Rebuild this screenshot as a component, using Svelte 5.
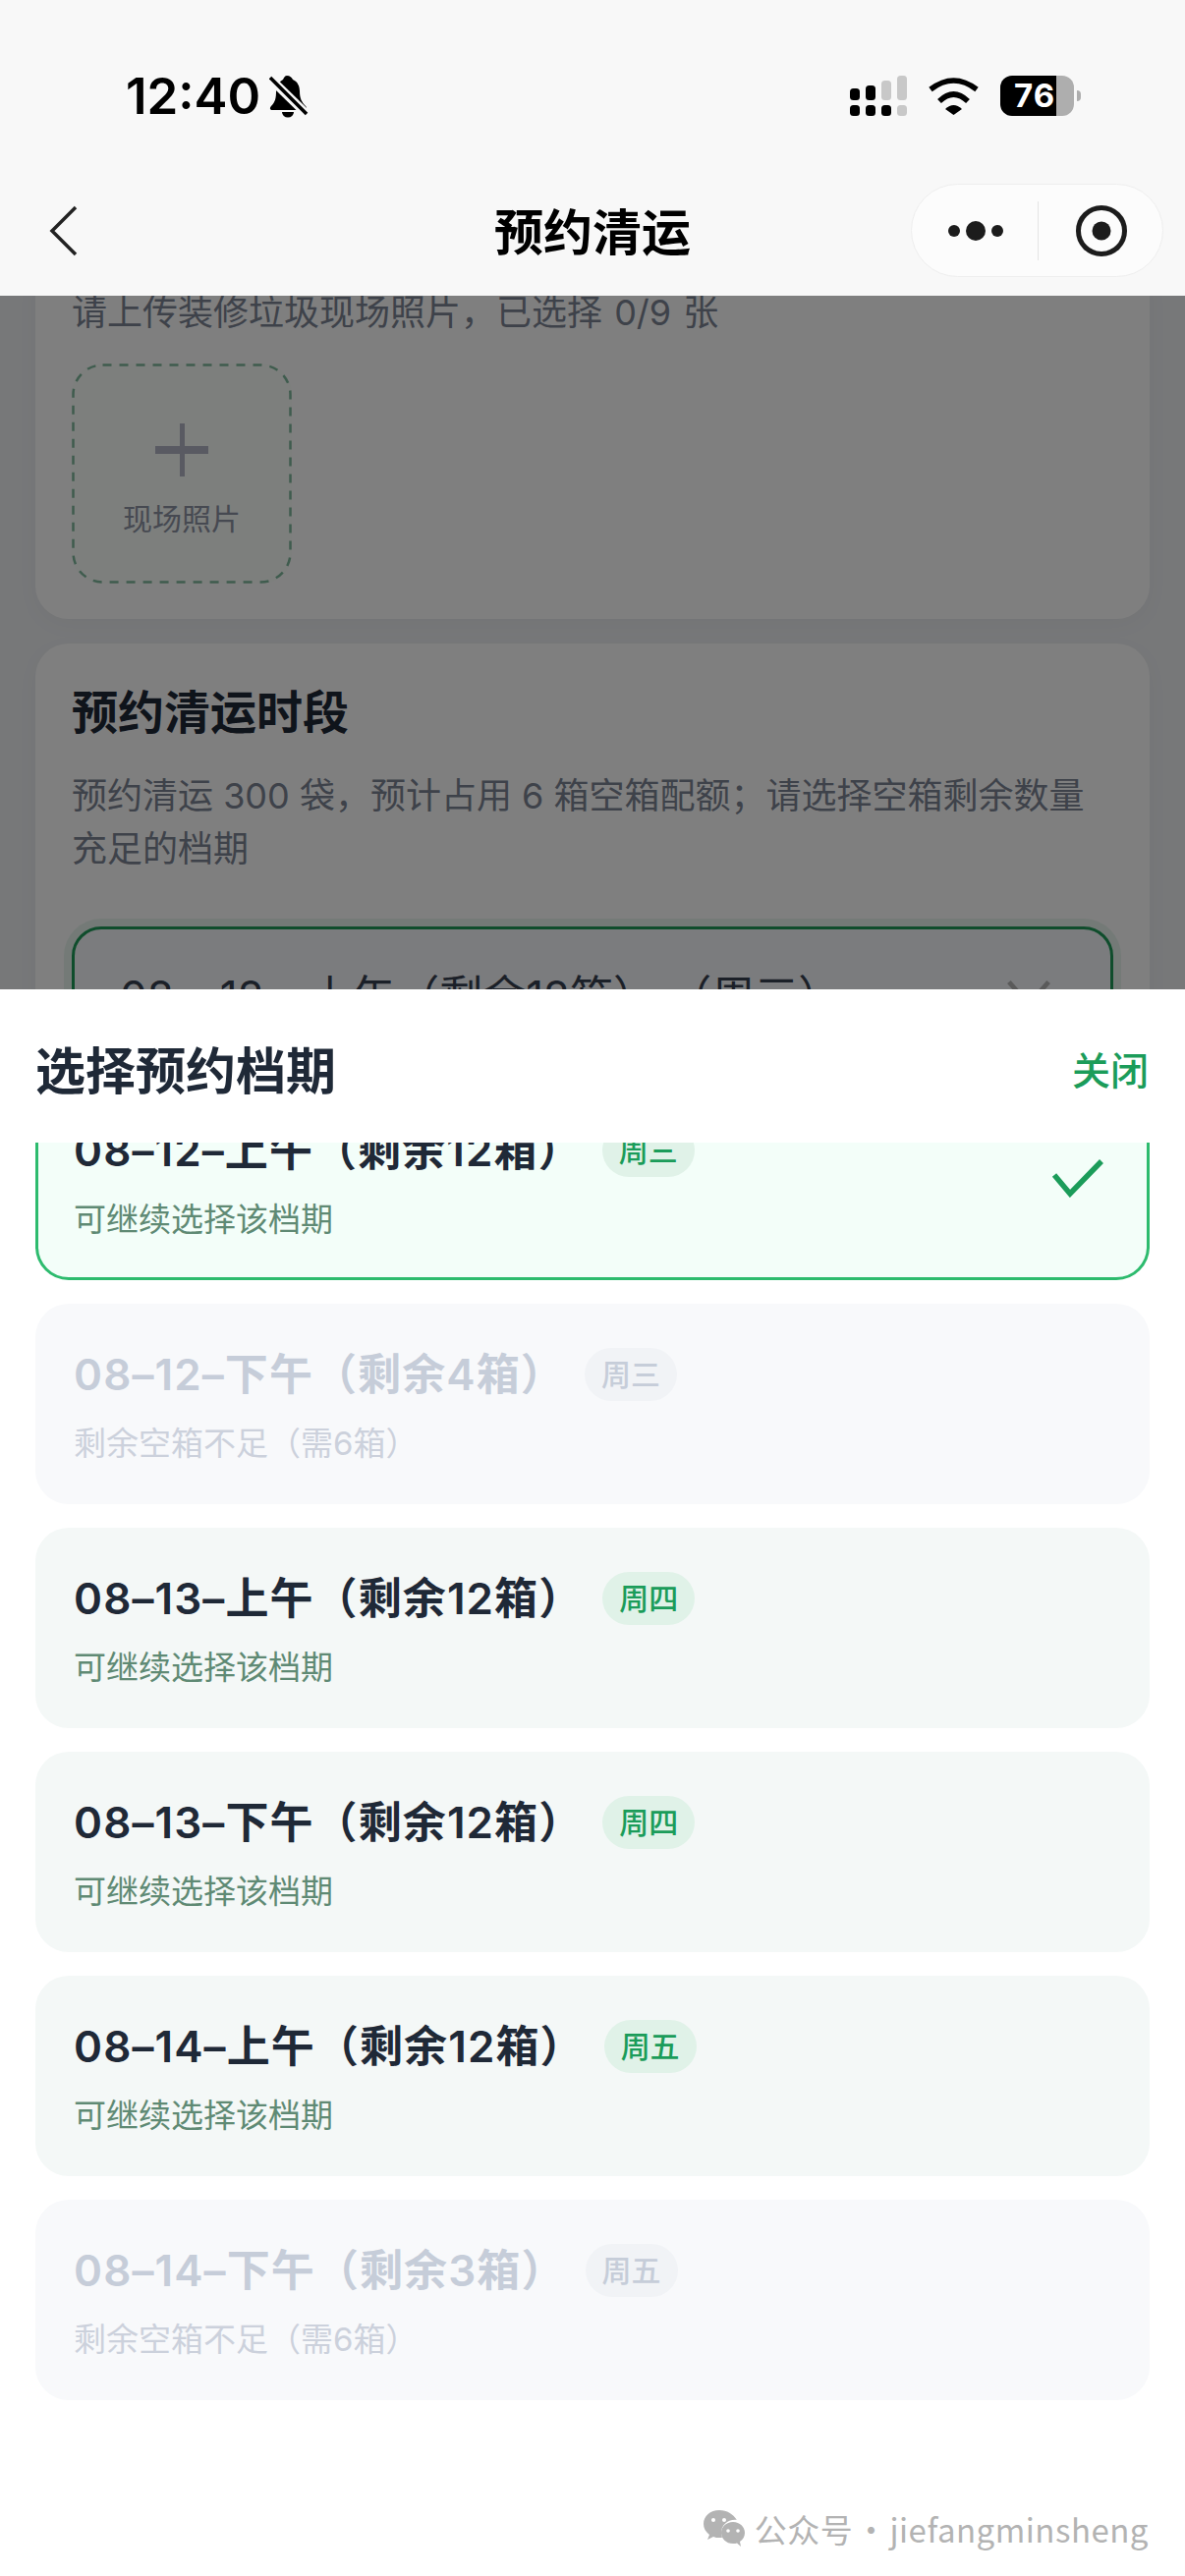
<script>
  import { onMount } from 'svelte'

  const slots = [
    { title: '08–12–上午（剩余12箱）', day: '周三', note: '可继续选择该档期', selected: true },
    { title: '08–12–下午（剩余4箱）', day: '周三', note: '剩余空箱不足（需6箱）', disabled: true },
    { title: '08–13–上午（剩余12箱）', day: '周四', note: '可继续选择该档期' },
    { title: '08–13–下午（剩余12箱）', day: '周四', note: '可继续选择该档期' },
    { title: '08–14–上午（剩余12箱）', day: '周五', note: '可继续选择该档期' },
    { title: '08–14–下午（剩余3箱）', day: '周五', note: '剩余空箱不足（需6箱）', disabled: true }
  ]

  let scroller

  onMount(() => {
    scroller.scrollTop = 64
  })
</script>

<div class="screen">
  <header class="top">
    <div class="status">
      <div class="status-left">
        <span class="time">12:40</span>
        <svg class="bell" viewBox="0 0 40 44" width="40" height="44">
          <path d="M18 1c3 0 5 2 6 4 5 2 7 7 7 12 0 7 2 11 6 15 2 2 1 4-1 4H3c-2 0-3-2-1-4 4-4 5-8 5-15 0-5 3-10 7-12 1-2 2-4 4-4z" fill="#000" />
          <path d="M13 38a6 5.500 0 0 0 12 0z" fill="#000" />
          <path d="M0 3l38 37" stroke="#f8f8f8" stroke-width="9" />
          <path d="M1 3l37 37" stroke="#000" stroke-width="3.500" />
        </svg>
      </div>
      <div class="status-right">
        <svg class="signal" viewBox="0 0 58 41" width="58" height="41">
          <rect x="0" y="13" width="10" height="12" rx="3.500" fill="#000" />
          <rect x="16" y="10" width="10" height="15" rx="3.500" fill="#000" />
          <rect x="32" y="5" width="10" height="20" rx="3.500" fill="#c8c8c8" />
          <rect x="48" y="0" width="10" height="25" rx="3.500" fill="#c8c8c8" />
          <rect x="0" y="30" width="10" height="11" rx="3.500" fill="#000" />
          <rect x="16" y="30" width="10" height="11" rx="3.500" fill="#000" />
          <rect x="32" y="30" width="10" height="11" rx="3.500" fill="#000" />
          <rect x="48" y="30" width="10" height="11" rx="3.500" fill="#c8c8c8" />
        </svg>
        <svg class="wifi" viewBox="0 0 51 39" width="51" height="39">
          <path d="M2 13Q25.500-5 49 13" fill="none" stroke="#000" stroke-width="5.500" />
          <path d="M11 25Q25.500 11 40 25" fill="none" stroke="#000" stroke-width="5.500" />
          <path d="M17 33Q25.500 25 34 33L25.500 39z" fill="#000" />
        </svg>
        <div class="battery">
          <div class="battery-body"><span>76</span></div>
          <div class="battery-nub"></div>
        </div>
      </div>
    </div>
    <nav class="nav">
      <svg class="back" viewBox="0 0 30 52" width="30" height="52">
        <path d="M27 2L3 26l24 24" fill="none" stroke="#222" stroke-width="3.500" />
      </svg>
      <div class="nav-title">预约清运</div>
      <div class="capsule">
        <svg viewBox="0 0 56 20" width="56" height="20">
          <circle cx="6" cy="10" r="6" fill="#1c1c1c" />
          <circle cx="28" cy="10" r="10" fill="#1c1c1c" />
          <circle cx="50" cy="10" r="6" fill="#1c1c1c" />
        </svg>
        <div class="capsule-line"></div>
        <svg viewBox="0 0 52 52" width="52" height="52">
          <circle cx="26" cy="26" r="23.500" fill="none" stroke="#1c1c1c" stroke-width="5" />
          <circle cx="26" cy="26" r="9.500" fill="#1c1c1c" />
        </svg>
      </div>
    </nav>
  </header>

  <main class="page">
    <section class="card first">
      <p class="desc">请上传装修垃圾现场照片，已选择 0/9 张</p>
      <div class="upload">
        <svg class="dash" viewBox="0 0 224 224" width="224" height="224">
          <rect x="1.500" y="1.500" width="221" height="221" rx="30" fill="none" stroke="#7fb89c" stroke-width="2.500" stroke-dasharray="9 8" />
        </svg>
        <div class="plus"></div>
        <span>现场照片</span>
      </div>
    </section>
    <section class="card">
      <h2>预约清运时段</h2>
      <p class="desc">预约清运 300 袋，预计占用 6 箱空箱配额；请选择空箱剩余数量充足的档期</p>
      <div class="picker">
        <span>08 – 12 – 上午（剩余12箱） （周三）</span>
        <svg viewBox="0 0 48 30" width="46" height="30">
          <path d="M3 3l21 24L45 3" fill="none" stroke="#b5b5b5" stroke-width="5" />
        </svg>
      </div>
    </section>
  </main>

  <div class="mask"></div>

  <div class="sheet">
    <div class="sheet-head">
      <h3>选择预约档期</h3>
      <button type="button" class="close">关闭</button>
    </div>
    <div class="scroll" bind:this={scroller}>
      <div class="list">
        {#each slots as slot}
          <div class="slot" class:selected={slot.selected} class:disabled={slot.disabled}>
            <div class="slot-main">
              <div class="slot-title">
                <span>{slot.title}</span>
                <em>{slot.day}</em>
              </div>
              <div class="slot-note">{slot.note}</div>
            </div>
            {#if slot.selected}
              <svg class="check" viewBox="0 0 54 40" width="54" height="40">
                <path d="M3 17l16 19L51 3" fill="none" stroke="#1b9c5a" stroke-width="5.500" />
              </svg>
            {/if}
          </div>
        {/each}
      </div>
    </div>
    <div class="mark">
      <svg viewBox="0 0 44 40" width="44" height="40">
        <path d="M17 1C8 1 1 7 1 15c0 4 2 8 6 11l-2 5 6-3c2 1 4 1 6 1 1 0 2 0 3-.2-.6-1.600-1-3.300-1-5 0-7 6-13 14-13h1.800C31 5 25 1 17 1z" fill="#b3b3b3" />
        <path d="M31 13c-7 0-12 5-12 11s5 11 12 11c2 0 3 0 4-.5l4 3.500-1-5c3-2 5-5 5-9 0-6-5-11-12-11z" fill="#b3b3b3" />
        <circle cx="11" cy="11" r="2" fill="#fff" />
        <circle cx="22" cy="11" r="2" fill="#fff" />
        <circle cx="26" cy="22" r="1.800" fill="#fff" />
        <circle cx="36" cy="22" r="1.800" fill="#fff" />
      </svg>
      <span>公众号 · jiefangminsheng</span>
    </div>
  </div>
</div>

<style>
  :global(body) {
    margin: 0;
    background: #eef0f3;
  }

  .screen {
    position: relative;
    width: 1206px;
    height: 2622px;
    overflow: hidden;
    background: #eef0f3;
    font-family: Inter, 'Noto Sans CJK SC', sans-serif;
    color: #1f2937;
  }

  .top {
    position: relative;
    z-index: 3;
    height: 301px;
    box-sizing: border-box;
    padding-top: 76px;
    background: #f8f8f8;
  }

  .status {
    display: flex;
    justify-content: space-between;
    align-items: center;
    height: 43px;
    padding: 0 106px 0 128px;
  }

  .status-left {
    display: flex;
    align-items: center;
    gap: 9px;
  }

  .time {
    font-size: 51px;
    font-weight: 600;
    line-height: 43px;
    color: #000;
  }

  .status-right {
    display: flex;
    align-items: center;
  }

  .wifi {
    margin: 0 22px 0 22px;
  }

  .battery {
    display: flex;
    align-items: center;
    gap: 3px;
  }

  .battery-body {
    width: 75px;
    height: 41px;
    border-radius: 12px;
    box-sizing: border-box;
    padding-left: 14px;
    background: linear-gradient(90deg, #000 57px, #aeaeae 57px);
    font-size: 33px;
    font-weight: 700;
    line-height: 41px;
    letter-spacing: 1px;
    color: #fff;
  }

  .battery-nub {
    width: 4px;
    height: 11px;
    border-radius: 0 6px 6px 0;
    background: #aeaeae;
  }

  .nav {
    display: grid;
    grid-template-columns: 1fr auto 1fr;
    align-items: center;
    height: 95px;
    margin-top: 68px;
    padding: 0 22px;
  }

  .back {
    margin-left: 28px;
  }

  .nav-title {
    padding-bottom: 4px;
    font-size: 50px;
    font-weight: 600;
    color: #000;
  }

  .capsule {
    justify-self: end;
    display: flex;
    align-items: center;
    box-sizing: border-box;
    width: 257px;
    height: 95px;
    padding-left: 37px;
    border: 1.500px solid #eeeeee;
    border-radius: 48px;
    background: #fcfcfc;
  }

  .capsule-line {
    width: 1px;
    height: 60px;
    margin: 0 38px 0 35px;
    background: #e4e4e4;
  }

  .page {
    padding: 0 36px;
    height: 2321px;
    overflow: hidden;
  }

  .card {
    margin-bottom: 25px;
    padding: 40px 37px;
    border-radius: 34px;
    background: #fff;
    box-shadow: 0 6px 24px rgba(0, 0, 0, 0.03);
  }

  .card.first {
    margin-top: -40px;
    padding: 30px 37px 36px;
  }

  .desc {
    margin: 0;
    font-size: 36px;
    line-height: 54px;
    color: #7d8594;
  }

  .first .desc {
    word-spacing: 2px;
  }

  .upload {
    position: relative;
    display: flex;
    flex-direction: column;
    align-items: center;
    box-sizing: border-box;
    width: 224px;
    height: 224px;
    margin-top: 25px;
    padding-top: 61px;
    border-radius: 30px;
    background: #fafefb;
  }

  .dash {
    position: absolute;
    inset: 0;
  }

  .plus {
    width: 54px;
    height: 54px;
    background:
      linear-gradient(#b3b5c4, #b3b5c4) center / 54px 8px no-repeat,
      linear-gradient(#b3b5c4, #b3b5c4) center / 5px 54px no-repeat;
  }

  .upload span {
    margin-top: 21px;
    font-size: 30px;
    line-height: 44px;
    color: #8d93a3;
  }

  h2 {
    margin: 0 0 28px;
    font-size: 47px;
    font-weight: 700;
    line-height: 60px;
    color: #1f2937;
  }

  .picker {
    display: flex;
    justify-content: space-between;
    align-items: center;
    box-sizing: border-box;
    height: 136px;
    margin-top: 52px;
    padding: 0 60px 0 46px;
    border: 3.500px solid #1e9a58;
    border-radius: 30px;
    background: #f6f8fc;
    box-shadow: 0 0 0 8px rgba(34, 160, 90, 0.1);
    font-size: 44px;
    color: #374151;
  }

  .mask {
    position: absolute;
    inset: 0;
    z-index: 1;
    background: rgba(0, 0, 0, 0.5);
  }

  .sheet {
    position: absolute;
    left: 0;
    right: 0;
    top: 1007px;
    bottom: 0;
    z-index: 2;
    display: flex;
    flex-direction: column;
    background: #fff;
  }

  .sheet-head {
    display: flex;
    justify-content: space-between;
    align-items: center;
    height: 156px;
    padding: 3px 37px 0 36px;
    box-sizing: border-box;
  }

  h3 {
    margin: 0;
    font-size: 51px;
    font-weight: 700;
    color: #1f2937;
  }

  .close {
    padding: 0;
    border: 0;
    background: none;
    font: inherit;
    font-size: 39px;
    font-weight: 500;
    color: #1b9c5a;
  }

  .scroll {
    flex: 1;
    min-height: 0;
    overflow: hidden;
  }

  .list {
    display: flex;
    flex-direction: column;
    gap: 24px;
    padding: 0 36px 240px;
  }

  .slot {
    display: flex;
    justify-content: space-between;
    align-items: center;
    box-sizing: border-box;
    height: 204px;
    padding: 0 43px 0 39px;
    border-radius: 34px;
    background: #f4f8f7;
  }

  .slot.selected {
    border: 3px solid #2dbb6e;
    padding-left: 36px;
    background: #f3fef9;
  }

  .slot.disabled {
    background: #f8f9fb;
  }

  .slot-main {
    padding-top: 2px;
  }

  .slot-title {
    display: flex;
    align-items: center;
    gap: 20px;
    height: 54px;
    font-size: 44px;
    font-weight: 600;
    letter-spacing: 1.100px;
    color: #1f2937;
  }

  .slot-title em {
    width: 94px;
    height: 54px;
    margin-top: 6px;
    border-radius: 27px;
    background: #e0f2e8;
    font-size: 30px;
    font-style: normal;
    font-weight: 500;
    letter-spacing: 0;
    line-height: 54px;
    text-align: center;
    color: #1b9c5a;
  }

  .slot-note {
    margin-top: 24px;
    font-size: 33px;
    line-height: 44px;
    color: #5f8a74;
  }

  .disabled .slot-title {
    color: #c6cdd9;
  }

  .disabled .slot-title em {
    background: #f1f3f6;
    color: #c6cdd9;
  }

  .disabled .slot-note {
    color: #ccd1dc;
  }

  .check {
    margin-top: -4px;
  }

  .mark {
    position: absolute;
    right: 37px;
    bottom: 28px;
    display: flex;
    align-items: center;
    gap: 9px;
    font-family: 'Noto Sans CJK SC', sans-serif;
    font-size: 33px;
    line-height: 40px;
    letter-spacing: 0.5px;
    word-spacing: -6px;
    color: #b3b3b3;
  }
</style>
